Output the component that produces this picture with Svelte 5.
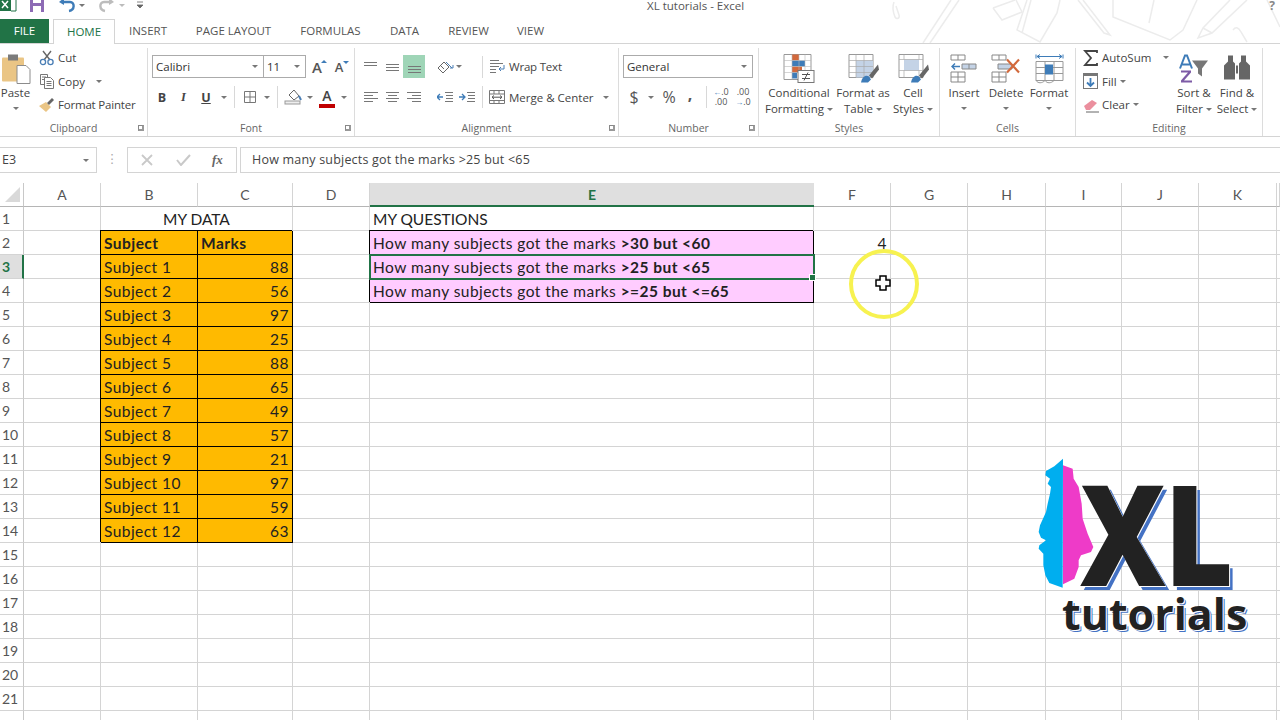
<script>
  const cols = ['A', 'B', 'C', 'D', 'E', 'F', 'G', 'H', 'I', 'J', 'K', ''];
  const marks = [88, 56, 97, 25, 88, 65, 49, 57, 21, 97, 59, 63];
  const rows = Array.from({ length: 22 }, (_, i) => i + 1);
  const tabs = ['INSERT', 'PAGE LAYOUT', 'FORMULAS', 'DATA', 'REVIEW', 'VIEW'];

  const questions = [
    ['How many subjects got the marks ', '>30 but <60'],
    ['How many subjects got the marks ', '>25 but <65'],
    ['How many subjects got the marks ', '>=25 but <=65']
  ];

  // what sits in a given cell: text plus class names
  function cell(r, c) {
    if (r === 1 && c === 'B') return { text: 'MY DATA', cls: 'merged caps' };
    if (r === 1 && c === 'C') return { text: '', cls: 'merged-end' };
    if (r === 1 && c === 'E') return { text: 'MY QUESTIONS', cls: 'caps' };
    if (r === 2 && c === 'B') return { text: 'Subject', cls: 'data bold' };
    if (r === 2 && c === 'C') return { text: 'Marks', cls: 'data bold' };
    if (r >= 3 && r <= 14 && c === 'B') return { text: 'Subject ' + (r - 2), cls: 'data' };
    if (r >= 3 && r <= 14 && c === 'C') return { text: marks[r - 3], cls: 'data num' };
    if (r >= 2 && r <= 4 && c === 'E') return { q: questions[r - 2], cls: r === 3 ? 'pink active' : 'pink' };
    if (r === 2 && c === 'F') return { text: 4, cls: 'num' };
    return { text: '', cls: '' };
  }
</script>

<div class="app">
  <!-- title bar with quick access icons -->
  <header class="titlebar">
    <svg class="deco" width="430" height="43" viewBox="0 0 430 43" fill="none" stroke="#ececec" stroke-width="1.500">
      <path d="M44 2c-2 5-1 10 1 15 2 3 5 1 4-2l-3-9" />
      <path d="M73 43 101 0M80 43l29-43" />
      <path d="M143 8l22-8M143 8l9 12 20-8-6-12" />
      <path d="M177 0l-10 30 23 12 17-29 3-13M172 33l9-33" />
      <path d="M233 0l27 35-6-2-26-33" />
      <path d="M263 0v17l57 23 13-10 14-30M299 23l5-23" />
      <path d="M380 0l-27 28-5 10 14-5 35-33M353 28l9 5" />
      <path d="M383 30c3-4 6-2 8 2l6 10" />
      <path d="M417 0l13 27" />
    </svg>
    <svg class="qat" width="150" height="19" viewBox="0 0 150 19">
      <rect x="0" y="-6" width="12" height="17" fill="#217346" />
      <path d="M11-4h5V11h-5" fill="#fff" stroke="#217346" />
      <path d="M2 1l6 7M8 1L2 8" stroke="#fff" stroke-width="1.500" />
      <path d="M30-2H44V12H30z" fill="#8d6bb5" />
      <rect x="33" y="-2" width="8" height="5" fill="#fff" />
      <rect x="33" y="6" width="8" height="6" fill="#fff" />
      <path d="M62 2h8c5 0 5 8-1 9" fill="none" stroke="#3e7cb8" stroke-width="2.400" />
      <path d="M59 2l5-4v7z" fill="#3e7cb8" />
      <path d="M79 4h6l-3 3z" fill="#777" />
      <path d="M111 2h-7c-5 0-5 8 1 9" fill="none" stroke="#bcbcbc" stroke-width="2.400" />
      <path d="M114 2l-5-4v7z" fill="#bcbcbc" />
      <path d="M119 4h6l-3 3z" fill="#bcbcbc" />
      <path d="M137 2h6M137 5h6l-3 3z" fill="#666" stroke="#666" stroke-width=".8" />
    </svg>
    <span class="doc-title">XL tutorials - Excel</span>
    <span class="help">?</span>
  </header>

  <nav class="tabs">
    <span class="tab file">FILE</span>
    <span class="tab home">HOME</span>
    {#each tabs as t}
      <span class="tab t-{t.split(' ')[0].toLowerCase()}">{t}</span>
    {/each}
  </nav>

  <!-- ribbon -->
  <section class="ribbon">
    <div class="group g-clip">
      <div class="body">
        <div class="big paste">
          <svg width="31" height="32" viewBox="0 0 31 32">
            <rect x="2" y="5" width="22" height="24" rx="1" fill="#eac585" />
            <rect x="8" y="2" width="10" height="6" fill="#7b7b7b" />
            <path d="M17 13h9l4 4v14H17z" fill="#fff" stroke="#8c8c8c" />
          </svg>
          <span class="lbl">Paste</span>
          <i class="caret"></i>
        </div>
        <div class="small-col">
          <div class="small">
            <svg width="16" height="16" viewBox="0 0 16 16" fill="none">
              <path d="M4 1l7 9M12 1 5 10" stroke="#666" stroke-width="1.400" />
              <circle cx="4" cy="12" r="2.600" stroke="#4a7eb5" stroke-width="1.300" />
              <circle cx="11.500" cy="12" r="2.600" stroke="#4a7eb5" stroke-width="1.300" />
            </svg>
            <span>Cut</span>
          </div>
          <div class="small">
            <svg width="16" height="16" viewBox="0 0 16 16" fill="#fff" stroke="#777">
              <path d="M1.500 1.500h7v10h-7zM3 4h4M3 6.500h4" />
              <path d="M5.500 4.500h6l3 3v8h-9zM7.500 8.500h5M7.500 10.500h5M7.500 12.500h5" />
            </svg>
            <span>Copy</span>
            <i class="caret spaced"></i>
          </div>
          <div class="small">
            <svg width="16" height="16" viewBox="0 0 16 16">
              <path d="M0 9l7-4 5 5-5 5z" fill="#eac585" />
              <path d="M8 6l5-5 2 2-5 5z" fill="#666" />
            </svg>
            <span class="tight">Format Painter</span>
          </div>
        </div>
      </div>
      <div class="glabel">Clipboard<i class="launch"></i></div>
    </div>

    <div class="group g-font">
      <div class="body stack">
        <div class="row1">
          <div class="select font-name">Calibri<i class="caret"></i></div>
          <div class="select font-size">11<i class="caret"></i></div>
          <span class="grow">A<i class="tri-up"></i></span>
          <span class="shrink">A<i class="tri-down"></i></span>
        </div>
        <div class="row2">
          <span class="tb w20 fmt b">B</span>
          <span class="tb w23 fmt it">I</span>
          <span class="tb w22 fmt u">U</span>
          <span class="tb w13"><i class="caret"></i></span>
          <i class="sep"></i>
          <span class="tb w22">
            <svg width="14" height="14" viewBox="0 0 14 14" fill="none" stroke="#777"><path d="M1.500 1.500h11v11h-11zM7 1.500v11M1.500 7h11" /></svg>
          </span>
          <span class="tb w12"><i class="caret"></i></span>
          <i class="sep"></i>
          <span class="tb w22">
            <svg width="18" height="16" viewBox="0 0 18 16" fill="none">
              <path d="M5 6l5-5 5 6-5 4z" stroke="#666" />
              <path d="M15 7l2 4" stroke="#4a7eb5" stroke-width="2" />
              <rect x="1" y="12" width="15" height="3" fill="#eee" stroke="#999" />
            </svg>
          </span>
          <span class="tb w12"><i class="caret"></i></span>
          <span class="tb w22 color-a">A</span>
          <span class="tb w12"><i class="caret"></i></span>
        </div>
      </div>
      <div class="glabel">Font<i class="launch"></i></div>
    </div>

    <div class="group g-align">
      <div class="body stack">
        <div class="row1">
          <span class="tb w22"><svg width="15" height="12" viewBox="0 0 15 12" class="lines"><path d="M1 1.500h13M1 4.500h13" /></svg></span>
          <span class="tb w22"><svg width="15" height="12" viewBox="0 0 15 12" class="lines"><path d="M1 3.500h13M1 6.500h13M1 9.500h13" /></svg></span>
          <span class="tb w22 on"><svg width="15" height="12" viewBox="0 0 15 12" class="lines"><path d="M1 5.500h13M1 8.500h13M1 11.500h13" /></svg></span>
          <span class="tb w22 ml9">
            <svg width="17" height="16" viewBox="0 0 17 16" fill="none" stroke="#666">
              <path d="M1 9l6-6 5 5-6 6z" />
              <path d="M4 7l3 3" />
              <path d="M9 3l6 6M16 6v3h-3" stroke="#4a7eb5" />
            </svg>
          </span>
          <span class="tb w12 back3"><i class="caret"></i></span>
          <i class="sep s-align"></i>
          <span class="tb w22 ml3">
            <svg width="16" height="16" viewBox="0 0 16 16" fill="none" stroke="#777"><path d="M1 1.500h9M1 4.500h13M1 7.500h9M1 10.500h6M1 13.500h6" /><path d="M15 6v4h-5M12 8l-2 2 2 2" stroke="#4a7eb5" /></svg>
          </span>
          <span class="act tight">Wrap Text</span>
        </div>
        <div class="row2">
          <span class="tb w22"><svg width="15" height="12" viewBox="0 0 15 12" class="lines"><path d="M1 1.500h14M1 4.500h9M1 7.500h14M1 10.500h9" /></svg></span>
          <span class="tb w22"><svg width="15" height="12" viewBox="0 0 15 12" class="lines"><path d="M1 1.500h13M3 4.500h9M1 7.500h13M3 10.500h9" /></svg></span>
          <span class="tb w22"><svg width="15" height="12" viewBox="0 0 15 12" class="lines"><path d="M0 1.500h14M5 4.500h9M0 7.500h14M5 10.500h9" /></svg></span>
          <span class="tb w22 ml9">
            <svg width="16" height="12" viewBox="0 0 16 12" fill="none" stroke="#777"><path d="M8 1.500h8M9 4.500h7M9 7.500h7M8 10.500h8" /><path d="M6 6H0M3 3 0 6l3 3" stroke="#3e7cb8" stroke-width="1.300" /></svg>
          </span>
          <span class="tb w22">
            <svg width="16" height="12" viewBox="0 0 16 12" fill="none" stroke="#777"><path d="M8 1.500h8M9 4.500h7M9 7.500h7M8 10.500h8" /><path d="M0 6h6M3 3l3 3-3 3" stroke="#3e7cb8" stroke-width="1.300" /></svg>
          </span>
          <i class="sep s-align2"></i>
          <span class="tb w22 ml3">
            <svg width="16" height="14" viewBox="0 0 16 14" fill="none" stroke="#777"><path d="M.5.500h15v13H.5zM.5 4h15M.5 10.500h15M5 .5V4M10 .5V4M5 10.500v3M10 10.500v3" /><path d="M3 7.200h10M5 5.500 3 7.200 5 9M11 5.500l2 1.700L11 9" stroke="#555" /></svg>
          </span>
          <span class="act">Merge &amp; Center</span>
          <i class="caret spaced-lg"></i>
        </div>
      </div>
      <div class="glabel">Alignment<i class="launch"></i></div>
    </div>

    <div class="group g-num">
      <div class="body stack">
        <div class="row1">
          <div class="select general">General<i class="caret"></i></div>
        </div>
        <div class="row2 num-row">
          <span class="tb w22 big-sym">$</span>
          <span class="tb w12"><i class="caret"></i></span>
          <span class="tb w24 big-sym">%</span>
          <span class="tb w18 comma">,</span>
          <i class="sep s-num"></i>
          <span class="tb w22 dec"><b>←</b>.0<br />.00</span>
          <span class="tb w22 dec">.00<br /><b>→</b>.0</span>
        </div>
      </div>
      <div class="glabel">Number<i class="launch"></i></div>
    </div>

    <div class="group g-styles">
      <div class="body">
        <div class="big w68">
          <svg width="32" height="30" viewBox="0 0 32 30" fill="none">
            <path d="M1 1h27v25H1z" fill="#fff" stroke="#999" />
            <rect x="9" y="1" width="7" height="6" fill="#d2693c" />
            <rect x="9" y="7" width="13" height="6" fill="#3e7cb8" />
            <rect x="9" y="13" width="10" height="6" fill="#d2693c" />
            <rect x="9" y="19" width="5" height="6" fill="#3e7cb8" />
            <path d="M9 1v25M16 1v25M22 1v25M1 7h27M1 13h27M1 19h27" stroke="#b9b9b9" stroke-width=".6" />
            <rect x="15" y="17" width="16" height="12" fill="#fff" stroke="#777" />
            <path d="M19 21h8M19 25h8M25 19l-4 8" stroke="#555" />
          </svg>
          <span class="lbl">Conditional</span>
          <span class="lbl">Formatting<i class="caret inl"></i></span>
        </div>
        <div class="big w60">
          <svg width="32" height="30" viewBox="0 0 32 30" fill="none">
            <path d="M2 1h24v23H2z" fill="#fff" stroke="#999" />
            <rect x="9" y="7" width="17" height="17" fill="#c4d3e6" />
            <path d="M9 1v23M17 1v23M2 7h24M2 13h24M2 19h24" stroke="#a9a9a9" stroke-width=".7" />
            <path d="M14 29c1-6 5-8 8-6l2 3-3 3z" fill="#3e7cb8" />
            <path d="M22 22 31 11l1 5-7 9z" fill="#666" />
          </svg>
          <span class="lbl">Format as</span>
          <span class="lbl">Table<i class="caret inl"></i></span>
        </div>
        <div class="big w40">
          <svg width="32" height="30" viewBox="0 0 32 30" fill="none">
            <path d="M2 1h24v23H2z" fill="#fff" stroke="#999" />
            <rect x="7" y="6" width="15" height="11" fill="#c4d3e6" />
            <path d="M7 1v5M22 1v5M2 6h24M2 17h24M7 17v7M22 17v7" stroke="#a9a9a9" stroke-width=".7" />
            <path d="M14 29c1-6 5-8 8-6l2 3-3 3z" fill="#3e7cb8" />
            <path d="M22 22 31 11l1 5-7 9z" fill="#666" />
          </svg>
          <span class="lbl">Cell</span>
          <span class="lbl">Styles<i class="caret inl"></i></span>
        </div>
      </div>
      <div class="glabel">Styles</div>
    </div>

    <div class="group g-cells">
      <div class="body">
        <div class="big w42">
          <svg width="28" height="30" viewBox="0 0 28 30" fill="none" stroke="#888">
            <path d="M1 1.500h14v5H1zM8 1.500v5M1 18.500h14v10H1zM8 18.500v10M1 23.500h14" />
            <path d="M12 10.500h14v5H12zM19 10.500v5" fill="#c4d3e6" />
            <path d="M10 13H2M5 10l-3 3 3 3" stroke="#3e7cb8" stroke-width="1.400" />
          </svg>
          <span class="lbl">Insert</span>
          <i class="caret"></i>
        </div>
        <div class="big w42">
          <svg width="30" height="30" viewBox="0 0 30 30" fill="none" stroke="#888">
            <path d="M1 1.500h14v5H1zM8 1.500v5M1 18.500h14v10H1zM8 18.500v10M1 23.500h14" />
            <path d="M7 10.500h14v5H7z" fill="#c4d3e6" />
            <path d="M16 6l12 13M28 6 16 19" stroke="#d2693c" stroke-width="2.200" />
          </svg>
          <span class="lbl">Delete</span>
          <i class="caret"></i>
        </div>
        <div class="big w44">
          <svg width="30" height="30" viewBox="0 0 30 30" fill="none" stroke="#999">
            <path d="M2 8h27v19H2zM11 8v19M20 8v19M2 14h27M2 20h27" />
            <rect x="11" y="11" width="8" height="10" fill="#3e7cb8" stroke="none" />
            <path d="M2 1v4M29 1v4M3 3h25M6 1 3 3l3 2M25 1l3 2-3 2" stroke="#3e7cb8" />
            <path d="M2 27c2 3 6 3 9 0 2 3 6 3 9 0" />
          </svg>
          <span class="lbl">Format</span>
          <i class="caret"></i>
        </div>
      </div>
      <div class="glabel">Cells</div>
    </div>

    <div class="group g-edit">
      <div class="body">
        <div class="small-col edit-col">
          <div class="small">
            <svg width="16" height="16" viewBox="0 0 16 16" fill="none"><path d="M14 3V1H2l6 7-6 7h12v-2" stroke="#444" stroke-width="1.800" /></svg>
            <span>AutoSum</span>
            <i class="caret spaced-lg"></i>
          </div>
          <div class="small">
            <svg width="16" height="16" viewBox="0 0 16 16" fill="none">
              <rect x=".5" y=".5" width="14" height="15" fill="#fff" stroke="#777" />
              <rect x="0" y="0" width="15" height="3" fill="#777" />
              <path d="M7.500 5v8M4 9.500l3.500 3.500L11 9.500" stroke="#3e7cb8" stroke-width="1.800" />
            </svg>
            <span>Fill</span><i class="caret inl"></i>
          </div>
          <div class="small">
            <svg width="16" height="16" viewBox="0 0 16 16">
              <path d="M1 9 9 3l5 3-7 7H3z" fill="#eb8f9e" />
              <path d="M3 15h13" stroke="#666" />
            </svg>
            <span>Clear</span><i class="caret inl"></i>
          </div>
        </div>
        <div class="big w42">
          <svg width="32" height="30" viewBox="0 0 32 30" fill="none">
            <path d="M2 15 7 2h2l5 13M4 11h8" stroke="#3e7cb8" stroke-width="2" />
            <path d="M3 17h10v2L6 27h8v2H3v-2l7-8H3z" fill="#7d5ba6" />
            <path d="M14 7h16l-6 8v8l-4-3v-5z" fill="#777" />
          </svg>
          <span class="lbl">Sort &amp;</span>
          <span class="lbl">Filter<i class="caret inl"></i></span>
        </div>
        <div class="big w44">
          <svg width="28" height="30" viewBox="0 0 28 30" fill="#666">
            <path d="M5 2h5v6l2 2v16H1V12l4-4zM18 2h5v6l4 4v14H16V10l2-2zM13 12h2v8h-2z" />
          </svg>
          <span class="lbl">Find &amp;</span>
          <span class="lbl">Select<i class="caret inl"></i></span>
        </div>
      </div>
      <div class="glabel">Editing</div>
    </div>
  </section>

  <!-- formula bar -->
  <section class="formula">
    <div class="namebox">E3<i class="caret"></i></div>
    <span class="dots">⋮</span>
    <div class="fx-btns">
      <svg width="12" height="12" viewBox="0 0 12 12" stroke="#c9c9c9" stroke-width="1.800"><path d="M1 1l10 10M11 1 1 11" /></svg>
      <svg width="15" height="12" viewBox="0 0 15 12" fill="none" stroke="#c9c9c9" stroke-width="2"><path d="M1 6l4 5 9-10" /></svg>
      <span class="fx">fx</span>
    </div>
    <div class="finput">How many subjects got the marks &gt;25 but &lt;65</div>
  </section>

  <!-- worksheet -->
  <section class="sheet">
    <div class="corner"><i></i></div>
    {#each cols as c}
      <div class="colhead" class:sel={c === 'E'}>{c}</div>
    {/each}
    {#each rows as r}
      <div class="rowhead" class:sel={r === 3}>{r < 22 ? r : ''}</div>
      {#each cols as c}
        {@const v = cell(r, c)}
        <div class="cell {v.cls}">
          {#if v.q}{v.q[0]}<b>{v.q[1]}</b>{:else}{v.text}{/if}
          {#if v.cls === 'pink active'}<i class="handle"></i>{/if}
        </div>
      {/each}
    {/each}
  </section>

  <!-- mouse highlight drawn by the screen recorder -->
  <div class="pointer">
    <svg width="76" height="76" viewBox="0 0 76 76">
      <circle cx="39" cy="39" r="33" fill="none" stroke="#f7f250" stroke-width="4" />
      <path d="M35 31h6v4h4v6h-4v4h-6v-4h-4v-6h4z" fill="#fff" stroke="#000" stroke-width="1.500" />
    </svg>
  </div>

  <!-- channel logo -->
  <div class="logo">
    <svg width="64" height="134" viewBox="55 20 170 402">
      <path d="M131 25 105 48 80 62l-2 13 14 10-7 15 10 10-3 20-7 30-5 25-18 40-4 20 7 17 15 8-20 15-2 10 14 15v35l6 30 12 23 40 14z" fill="#00aeef" />
      <path d="M131 45l29 10 3 30 15 25 9 50 3 45 15 45 17 40-7 15-30 10-7 15v20l-13 35-34 17z" fill="#ee3bc8" />
    </svg>
    <span class="xl">XL</span>
    <span class="tut">tutorials</span>
  </div>
</div>

<style>
  :global(body) {
    margin: 0;
    background: #fff;
  }

  .app {
    position: relative;
    width: 1280px;
    height: 720px;
    overflow: hidden;
    font-family: "Open Sans", "Liberation Sans", sans-serif;
    color: #444;
    background: #fff;
  }

  i { display: inline-block; font-style: normal; }

  /* ===== TITLE BAR ===== */
  .titlebar {
    position: relative;
    height: 19px;
    text-align: center;
  }
  .deco { position: absolute; top: 0; right: 0; }
  .qat { position: absolute; top: 0; left: 0; }
  .doc-title {
    position: absolute;
    left: 647px;
    top: 0;
    font-size: 11.500px;
    line-height: 12px;
    color: #555;
  }
  .help {
    position: absolute;
    right: 5px;
    top: 0;
    font-size: 12px;
    line-height: 12px;
    font-weight: 700;
    color: #888;
  }

  /* ===== TABS ===== */
  .tabs {
    position: relative;
    height: 24px;
    display: flex;
    font-size: 11.500px;
    line-height: 24px;
  }
  .tab { color: #555; text-align: center; }
  .file { width: 49px; background: #217346; color: #fff; }
  .home {
    width: 62px;
    margin-left: 4px;
    height: 25px;
    box-sizing: border-box;
    border: 1px solid #d4d4d4;
    border-bottom: none;
    background: #fff;
    color: #217346;
    z-index: 1;
  }
  .t-insert { width: 66px; }
  .t-page { width: 105px; }
  .t-formulas { width: 89px; }
  .t-data { width: 59px; }
  .t-review { width: 69px; }
  .t-view { width: 55px; }

  /* ===== RIBBON ===== */
  .ribbon {
    display: flex;
    height: 92px;
    border-top: 1px solid #d4d4d4;
    border-bottom: 1px solid #d4d4d4;
    box-sizing: content-box;
    font-size: 11.500px;
  }
  .group {
    box-sizing: border-box;
    height: 88px;
    margin-top: 4px;
    display: flex;
    flex-direction: column;
    border-right: 1px solid #dcdcdc;
  }
  .g-clip { width: 148px; }
  .g-font { width: 207px; }
  .g-align { width: 264px; }
  .g-num { width: 140px; }
  .g-styles { width: 181px; }
  .g-cells { width: 136px; }
  .g-edit { width: 187px; }

  .body { flex: 1; display: flex; min-height: 0; }
  .glabel {
    position: relative;
    height: 16px;
    line-height: 16px;
    text-align: center;
    color: #666;
    font-size: 10.500px;
  }
  .launch {
    position: absolute;
    right: 3px;
    top: 5px;
    width: 6px;
    height: 6px;
    border-left: 1px solid #888;
    border-top: 1px solid #888;
    border-right: 2px solid #999;
    border-bottom: 2px solid #999;
    box-sizing: border-box;
  }

  .caret {
    width: 0;
    height: 0;
    border-left: 3px solid transparent;
    border-right: 3px solid transparent;
    border-top: 3px solid #777;
  }
  .caret.spaced { margin-left: 8px; }
  .caret.spaced-lg { margin-left: 9px; }
  .caret.inl { margin-left: 3px; vertical-align: middle; }
  .small .caret.inl { margin-left: 0; }

  .big {
    display: flex;
    flex-direction: column;
    align-items: center;
    padding-top: 4px;
    flex-shrink: 0;
    white-space: nowrap;
  }
  .big svg { height: 33px; flex-shrink: 0; }
  .big .lbl { height: 16px; line-height: 16px; }
  .big > .caret { margin-top: 6px; }
  .big.paste { width: 31px; }
  .w68 { width: 68px; }
  .w60 { width: 60px; }
  .w44 { width: 44px; }
  .w42 { width: 42px; }
  .w40 { width: 40px; }
  .g-styles .body { padding-left: 6px; }
  .g-cells .body { padding-left: 3px; }
  .g-edit .body { padding-left: 7px; }

  .small-col { margin-left: 8px; margin-top: -2px; }
  .small {
    display: flex;
    align-items: center;
    gap: 3px;
    height: 23.500px;
    white-space: nowrap;
  }
  .tight { letter-spacing: -.2px; }
  .edit-col { margin-left: 0; width: 90px; flex-shrink: 0; }

  .stack { flex-direction: column; padding-top: 7px; }
  .row1, .row2 { display: flex; align-items: center; white-space: nowrap; }
  .row1 { height: 23px; }
  .row2 { height: 24px; margin-top: 7px; }
  .g-font .stack { padding-left: 4px; }
  .g-align .stack { padding-left: 4px; }
  .g-num .stack { padding-left: 4px; }

  .select {
    box-sizing: border-box;
    height: 23px;
    line-height: 21px;
    padding-left: 3px;
    border: 1px solid #ababab;
    color: #333;
    display: flex;
    align-items: center;
    justify-content: space-between;
    padding-right: 5px;
  }
  .font-name { width: 112px; }
  .font-size { width: 43px; margin-left: -1px; }
  .general { width: 130px; }

  .grow, .shrink { position: relative; color: #555; width: 14px; text-align: center; font-weight: 600; }
  .grow { font-size: 15px; margin-left: 4px; }
  .shrink { font-size: 13px; margin-left: 8px; }
  .tri-up, .tri-down { position: absolute; right: -3px; top: 3px; border-left: 3px solid transparent; border-right: 3px solid transparent; }
  .tri-up { border-bottom: 3px solid #3e7cb8; }
  .tri-down { border-top: 3px solid #3e7cb8; }

  .tb {
    display: flex;
    align-items: center;
    justify-content: center;
    height: 23px;
    flex-shrink: 0;
  }
  .w12 { width: 12px; }
  .w13 { width: 13px; }
  .w18 { width: 18px; }
  .w20 { width: 20px; }
  .w22 { width: 22px; }
  .w23 { width: 23px; }
  .w24 { width: 24px; }
  .ml3 { margin-left: 3px; }
  .ml9 { margin-left: 9px; }
  .back3 { margin-left: -3px; }
  .on { background: #9fd5b7; }

  .sep { width: 1px; height: 22px; background: #d8d8d8; margin: 0 4px; flex-shrink: 0; }
  .s-align { margin-left: 17px; margin-right: 0; }
  .s-align2 { margin-left: 4px; margin-right: 0; }
  .s-num { margin-left: 7px; margin-right: 3px; }

  .fmt { font-size: 12.500px; color: #444; font-family: "Liberation Serif", serif; }
  .b { font-weight: 700; font-family: "Open Sans", sans-serif; }
  .it { font-style: italic; font-weight: 700; }
  .u { text-decoration: underline; font-weight: 700; font-family: "Open Sans", sans-serif; }
  .color-a {
    font-size: 14px;
    line-height: 14px;
    font-weight: 600;
    background: linear-gradient(#c00000, #c00000) center 18px / 16px 4px no-repeat;
    padding-bottom: 3px;
    box-sizing: border-box;
  }
  .lines { fill: none; stroke: #777; stroke-width: 1; }
  .act { margin-left: 1px; color: #444; }

  .big-sym { font-size: 16px; color: #555; }
  .comma { font-size: 16px; font-weight: 700; color: #555; padding-bottom: 6px; box-sizing: border-box; }
  .dec { font-size: 9px; line-height: 10px; display: block; height: auto; text-align: center; color: #555; overflow: hidden; }
  .dec b { color: #3e7cb8; font-size: 8px; }

  /* ===== FORMULA BAR ===== */
  .formula {
    display: flex;
    height: 26px;
    margin-top: 10px;
    font-size: 12.500px;
    line-height: 24px;
  }
  .namebox {
    box-sizing: border-box;
    width: 97px;
    display: flex;
    align-items: center;
    justify-content: space-between;
    padding: 0 7px 0 2px;
    border: 1px solid #d4d4d4;
    border-left: none;
  }
  .dots { width: 30px; text-align: center; color: #aaa; font-family: "DejaVu Sans", sans-serif; }
  .fx-btns {
    box-sizing: border-box;
    width: 110px;
    display: flex;
    align-items: center;
    gap: 23px;
    padding-left: 13px;
    border: 1px solid #d4d4d4;
  }
  .fx { font-family: "Liberation Serif", serif; font-style: italic; font-weight: 700; font-size: 13px; color: #666; margin-left: -2px; }
  .finput {
    flex: 1;
    margin-left: 3px;
    padding-left: 11px;
    border: 1px solid #d4d4d4;
    border-right: none;
    color: #444;
    letter-spacing: .2px;
  }

  /* ===== SHEET ===== */
  .sheet {
    display: grid;
    grid-template-columns: 24px 77px 97px 95px 77px 444px 77px 77px 78px 76px 77px 78px 3px;
    grid-auto-rows: 24px;
    margin-top: 10px;
    font-family: Lato, "Liberation Sans", sans-serif;
    font-size: 15.500px;
    letter-spacing: .45px;
    color: #222;
  }
  .corner {
    position: relative;
    border-right: 1px solid #c8c8c8;
    border-bottom: 1px solid #b5b5b5;
  }
  .corner i {
    position: absolute;
    left: 5px;
    top: 4px;
    border-right: 15px solid #d9d9d9;
    border-top: 15px solid transparent;
  }
  .colhead {
    box-sizing: border-box;
    text-align: center;
    line-height: 23px;
    color: #555;
    font-size: 14px;
    letter-spacing: 0;
    border-right: 1px solid #d4d4d4;
    border-bottom: 1px solid #b5b5b5;
  }
  .colhead.sel {
    background: #dfdfdf;
    color: #217346;
    font-weight: 700;
    border-bottom: 2px solid #217346;
    border-right: none;
  }
  .rowhead {
    box-sizing: border-box;
    padding-left: 2px;
    line-height: 23px;
    color: #555;
    font-size: 14px;
    letter-spacing: 0;
    border-right: 1px solid #c8c8c8;
    border-bottom: 1px solid #d4d4d4;
  }
  .rowhead.sel {
    background: #dfdfdf;
    color: #217346;
    font-weight: 700;
    border-right: 2px solid #217346;
  }
  .cell {
    position: relative;
    box-sizing: border-box;
    padding: 0 3px;
    line-height: 24px;
    white-space: nowrap;
    border-right: 1px solid #d4d4d4;
    border-bottom: 1px solid #d4d4d4;
  }
  .num { text-align: right; }
  .bold { font-weight: 700; }
  .caps { letter-spacing: 0; }
  .merged { border-right: none; overflow: visible; padding-left: 62px; }
  .merged-end { border-right: 1px solid #d4d4d4; }
  .data {
    background: #ffba00;
    border-right: 1px solid #000;
    border-bottom: 1px solid #000;
    box-shadow: -1px -1px 0 #000;
  }
  .pink {
    background: #ffccff;
    border-right: 1px solid #000;
    border-bottom: 1px solid #000;
    box-shadow: -1px -1px 0 #000;
  }
  .active {
    outline: 2px solid #217346;
    outline-offset: -1px;
    z-index: 1;
  }
  .handle {
    position: absolute;
    right: -3px;
    bottom: -3px;
    width: 5px;
    height: 5px;
    background: #217346;
    border: 1px solid #fff;
  }

  /* ===== OVERLAYS ===== */
  .pointer {
    position: absolute;
    left: 845px;
    top: 245px;
    width: 76px;
    height: 76px;
  }
  .logo {
    position: absolute;
    left: 1020px;
    top: 450px;
    width: 250px;
    height: 200px;
  }
  .logo svg { position: absolute; left: 14px; top: 7px; }
  .xl {
    position: absolute;
    left: 60px;
    top: 27px;
    font: 900 140px/110px "Open Sans", sans-serif;
    letter-spacing: -2px;
    color: #222;
    text-shadow: 1px 1px 0 #fff, 4px 4px 0 #4472c4;
    transform: scaleX(.85);
    transform-origin: 0 50%;
  }
  .tut {
    position: absolute;
    left: 42px;
    top: 140px;
    font: 700 43px/48px "Open Sans", sans-serif;
    color: #222;
    text-shadow: 1px 1px 0 #fff, 2px 2px 0 #4472c4;
  }
</style>
